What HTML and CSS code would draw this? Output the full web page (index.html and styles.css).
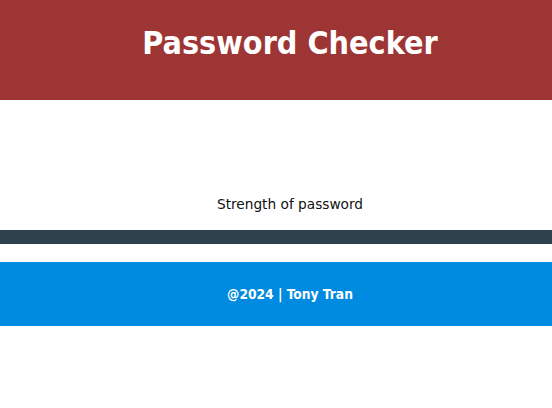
FILE: index.html
```html
<!DOCTYPE html>
<html>
<head>
<meta charset="utf-8">
<link rel="stylesheet" href="styles.css">
</head>
<body>
<header class="header"><h1 class="title">Password Checker</h1></header>
<main class="main">
  <p class="label">Strength of password</p>
</main>
<div class="bar"></div>
<footer class="footer"><p class="credit">@2024 | Tony Tran</p></footer>
</body>
</html>
```
FILE: styles.css
```css
* { box-sizing: border-box; }
body { margin: 0; font-family: "DejaVu Sans", sans-serif; background: #fff; }
.header { height: 100px; background: #9d3535; display: flex; justify-content: center; padding: 24px 0 0 28px; }
.title { margin: 0; color: #fff; font-family: "DejaVu Sans Condensed", "DejaVu Sans", sans-serif; font-size: 32px; font-weight: bold; line-height: 38px; }
.main { height: 130px; display: flex; justify-content: center; align-items: flex-end; padding: 0 0 18px 28px; }
.label { margin: 0; font-size: 13.7px; line-height: 16px; color: #111; }
.bar { height: 14px; background: #2e424e; margin-bottom: 18px; }
.footer { height: 64px; background: #008ae0; display: flex; justify-content: center; align-items: center; padding-left: 28px; }
.credit { margin: 0; color: #fff; font-family: "DejaVu Sans Condensed", "DejaVu Sans", sans-serif; font-size: 13.7px; font-weight: bold; line-height: 16px; }
```
